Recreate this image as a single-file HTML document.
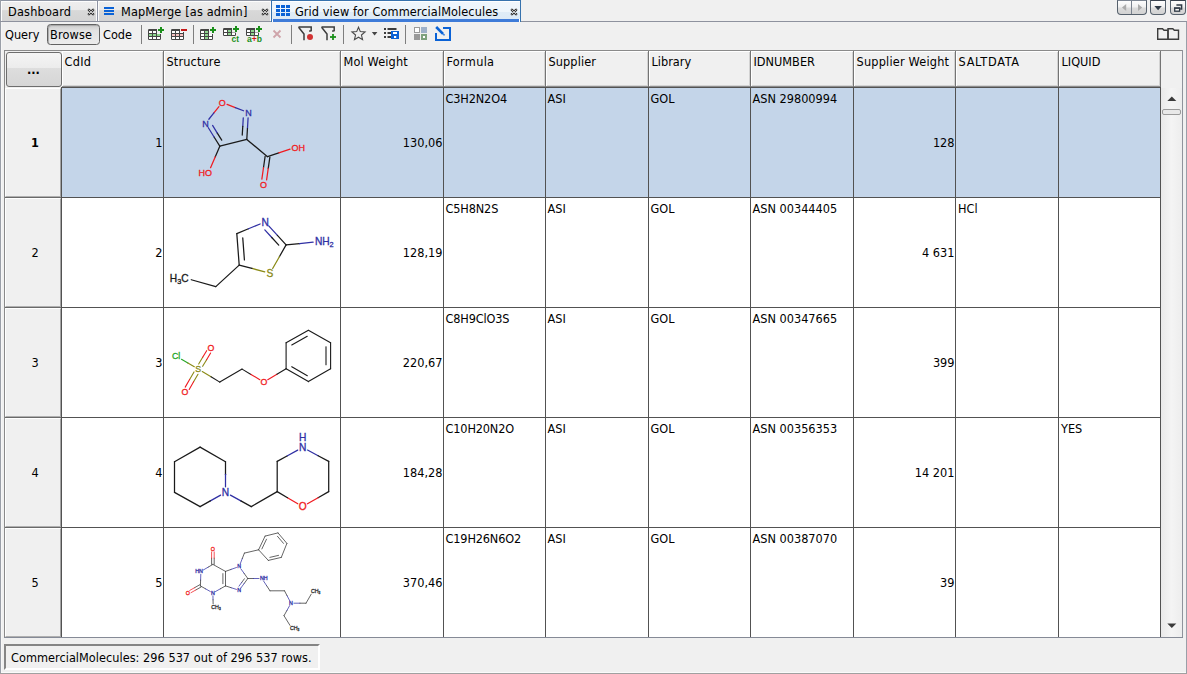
<!DOCTYPE html>
<html><head><meta charset="utf-8"><title>Grid view for CommercialMolecules</title>
<style>
html,body{margin:0;padding:0}
body{width:1187px;height:674px;overflow:hidden;background:#f0f0f0;position:relative;
 font-family:"DejaVu Sans Condensed","Liberation Sans",sans-serif;font-size:12.6px;color:#000;line-height:15px}
div,span{box-sizing:border-box}
.a{position:absolute}
.t{position:absolute;white-space:nowrap;height:15px;line-height:15px}
.r{text-align:right}
.mol text{font-family:"Liberation Sans","DejaVu Sans",sans-serif;stroke-width:0.3px;paint-order:stroke}
</style></head>
<body>
<div class="a" style="left:0px;top:0px;width:271px;height:1px;background:#8e95a3"></div>
<div class="a" style="left:0px;top:0px;width:1px;height:674px;background:#9a9fa8"></div>
<div class="a" style="left:1px;top:672px;width:1187px;height:1px;background:#fafafa"></div>
<div class="a" style="left:0px;top:673px;width:1187px;height:1px;background:#a0a0a0"></div>
<div class="a" style="left:1186px;top:21px;width:1px;height:652px;background:#9a9fa8"></div>
<div class="a" style="left:0px;top:21px;width:1187px;height:1px;background:#8e929e"></div>
<div class="a" style="left:1px;top:1px;width:270px;height:1px;background:#fdfdfd"></div>
<div class="a" style="left:2px;top:2px;width:94px;height:19px;background:linear-gradient(#eeeeee 0,#eaeaea 43%,#d8d8d8 45%,#d4d4d4 100%)"></div>
<div class="a" style="left:1px;top:1px;width:1px;height:20px;background:#fdfdfd"></div>
<div class="a" style="left:1px;top:22px;width:1px;height:650px;background:#f7f7f7"></div>
<div class="a" style="left:96px;top:1px;width:1px;height:20px;background:#fbfbfb"></div>
<div class="a" style="left:97px;top:1px;width:1px;height:20px;background:#8d92a2"></div>
<div class="a" style="left:98px;top:1px;width:1px;height:20px;background:#fbfbfb"></div>
<div class="a" style="left:99px;top:2px;width:171px;height:19px;background:linear-gradient(#eeeeee 0,#eaeaea 43%,#d8d8d8 45%,#d4d4d4 100%)"></div>
<div class="a" style="left:270px;top:1px;width:1px;height:20px;background:#fbfbfb"></div>
<div class="a" style="left:271px;top:0px;width:250px;height:22px;background:linear-gradient(#ffffff 0,#ffffff 5%,#eff6fc 6%,#edf5fb 50%,#dfecf7 51%,#dbe9f6 100%);border:1px solid #3672ad;border-bottom:none"></div>
<div class="a" style="left:273px;top:19px;width:246px;height:3px;background:#3e7bd8"></div>
<div class="a" style="left:272px;top:19px;width:1px;height:3px;background:#fff"></div>
<div class="a" style="left:519px;top:19px;width:1px;height:3px;background:#fff"></div>
<div class="t" style="left:8px;top:4px;letter-spacing:0.2px">Dashboard</div>
<svg class="a" style="left:86.5px;top:7.5px" width="8" height="8" viewBox="0 0 8 8"><path d="M1.9 1.9 L6.1 6.1 M6.1 1.9 L1.9 6.1" stroke="#333333" stroke-width="2.5" stroke-linecap="round"/><path d="M1.9 1.9 L6.1 6.1 M6.1 1.9 L1.9 6.1" stroke="#e8e8e8" stroke-width="0.8" stroke-linecap="round"/></svg>
<div class="a" style="left:104px;top:7px;width:10px;height:2px;background:#0a62d6"></div>
<div class="a" style="left:104px;top:10px;width:10px;height:2px;background:#0a62d6"></div>
<div class="a" style="left:104px;top:13px;width:10px;height:2px;background:#0a62d6"></div>
<div class="t" style="left:121px;top:4px;letter-spacing:0.15px">MapMerge [as admin]</div>
<svg class="a" style="left:260.5px;top:7.5px" width="8" height="8" viewBox="0 0 8 8"><path d="M1.9 1.9 L6.1 6.1 M6.1 1.9 L1.9 6.1" stroke="#333333" stroke-width="2.5" stroke-linecap="round"/><path d="M1.9 1.9 L6.1 6.1 M6.1 1.9 L1.9 6.1" stroke="#e8e8e8" stroke-width="0.8" stroke-linecap="round"/></svg>
<div class="a" style="left:276px;top:5px;width:4px;height:3px;background:#0a62d6"></div>
<div class="a" style="left:281px;top:5px;width:4px;height:3px;background:#0a62d6"></div>
<div class="a" style="left:286px;top:5px;width:4px;height:3px;background:#0a62d6"></div>
<div class="a" style="left:276px;top:9px;width:4px;height:3px;background:#0a62d6"></div>
<div class="a" style="left:281px;top:9px;width:4px;height:3px;background:#0a62d6"></div>
<div class="a" style="left:286px;top:9px;width:4px;height:3px;background:#0a62d6"></div>
<div class="a" style="left:276px;top:13px;width:4px;height:3px;background:#0a62d6"></div>
<div class="a" style="left:281px;top:13px;width:4px;height:3px;background:#0a62d6"></div>
<div class="a" style="left:286px;top:13px;width:4px;height:3px;background:#0a62d6"></div>
<div class="t" style="left:295px;top:4px;letter-spacing:0.09px">Grid view for CommercialMolecules</div>
<svg class="a" style="left:509.5px;top:7.5px" width="8" height="8" viewBox="0 0 8 8"><path d="M1.9 1.9 L6.1 6.1 M6.1 1.9 L1.9 6.1" stroke="#333333" stroke-width="2.5" stroke-linecap="round"/><path d="M1.9 1.9 L6.1 6.1 M6.1 1.9 L1.9 6.1" stroke="#e8e8e8" stroke-width="0.8" stroke-linecap="round"/></svg>
<div class="a" style="left:1117px;top:0px;width:30px;height:15px;background:linear-gradient(#fdfdfd 0,#f0f0f0 48%,#dcdcdc 52%,#d2d2d2 100%);border:1px solid #55606c;border-top:1px solid #7c8592;border-radius:0 0 4px 4px"></div>
<div class="a" style="left:1131px;top:1px;width:1px;height:13px;background:#7a828e"></div>
<div class="a" style="left:1150px;top:0px;width:16px;height:15px;background:linear-gradient(#fdfdfd 0,#f0f0f0 48%,#dcdcdc 52%,#d2d2d2 100%);border:1px solid #55606c;border-top:1px solid #7c8592;border-radius:0 0 4px 4px;border-top-color:#39424e"></div>
<div class="a" style="left:1170px;top:0px;width:16px;height:15px;background:linear-gradient(#fdfdfd 0,#f0f0f0 48%,#dcdcdc 52%,#d2d2d2 100%);border:1px solid #55606c;border-top:1px solid #7c8592;border-radius:0 0 4px 4px;border-top-color:#39424e"></div>
<svg class="a" style="left:1117px;top:0" width="70" height="15" viewBox="1117 0 70 15"><path d="M1126.2 4 L1126.2 11 L1122 7.5Z" fill="#ababab"/><path d="M1138 4 L1138 11 L1142.2 7.5Z" fill="#ababab"/><path d="M1154.4 6 L1161.8 6 L1158.1 10.2Z" fill="#2f3a46"/><path d="M1176.4 4.9 h5.2 v4.2 h-1.4" fill="none" stroke="#2f3a46" stroke-width="1.5"/><rect x="1174.7" y="8.1" width="4.9" height="3.1" fill="#f4f4f4" stroke="#2f3a46" stroke-width="1.3"/><rect x="1174" y="7.4" width="6.3" height="1.3" fill="#2f3a46"/></svg>
<div class="t" style="left:5px;top:27px;">Query</div>
<div class="a" style="left:47px;top:24px;width:53px;height:21px;border:1px solid #626262;border-radius:3.5px;background:linear-gradient(#cccccc 0,#e2e2e2 30%,#ececec 100%);box-shadow:inset 1px 1px 1px #a8a8a8"></div>
<div class="t" style="left:50px;top:27px;letter-spacing:0.15px">Browse</div>
<div class="t" style="left:103px;top:27px;">Code</div>
<div class="a" style="left:141px;top:25px;width:1px;height:19px;background:#7e7e7e"></div>
<div class="a" style="left:193px;top:25px;width:1px;height:19px;background:#7e7e7e"></div>
<div class="a" style="left:291px;top:25px;width:1px;height:19px;background:#7e7e7e"></div>
<div class="a" style="left:343px;top:25px;width:1px;height:19px;background:#7e7e7e"></div>
<div class="a" style="left:405px;top:25px;width:1px;height:19px;background:#7e7e7e"></div>
<svg class="a" style="left:140px;top:22px" width="320" height="26" viewBox="140 22 320 26"><rect x="148" y="29" width="13" height="11" rx="1.2" fill="#454545"/><rect x="149" y="31" width="3" height="2" fill="#ffffff"/><rect x="153" y="31" width="3" height="2" fill="#ffffff"/><rect x="157" y="31" width="3" height="2" fill="#ffffff"/><rect x="149" y="34" width="3" height="2" fill="#8fd68f"/><rect x="153" y="34" width="3" height="2" fill="#8fd68f"/><rect x="157" y="34" width="3" height="2" fill="#8fd68f"/><rect x="149" y="37" width="3" height="2" fill="#ffffff"/><rect x="153" y="37" width="3" height="2" fill="#ffffff"/><rect x="157" y="37" width="3" height="2" fill="#ffffff"/><rect x="157" y="26" width="8" height="8" fill="#f0f0f0"/><rect x="158" y="29.0" width="6" height="2" fill="#1a8f1a"/><rect x="160.0" y="27" width="2" height="6" fill="#1a8f1a"/><rect x="171" y="29" width="13" height="11" rx="1.2" fill="#454545"/><rect x="172" y="31" width="3" height="2" fill="#ffffff"/><rect x="176" y="31" width="3" height="2" fill="#ffffff"/><rect x="180" y="31" width="3" height="2" fill="#ffffff"/><rect x="172" y="34" width="3" height="2" fill="#f5c0c0"/><rect x="176" y="34" width="3" height="2" fill="#f5c0c0"/><rect x="180" y="34" width="3" height="2" fill="#f5c0c0"/><rect x="172" y="37" width="3" height="2" fill="#ffffff"/><rect x="176" y="37" width="3" height="2" fill="#ffffff"/><rect x="180" y="37" width="3" height="2" fill="#ffffff"/><rect x="180" y="27" width="8" height="5" fill="#f0f0f0"/><rect x="181" y="29" width="6" height="2" fill="#c41818"/><rect x="200" y="29" width="13" height="11" rx="1.2" fill="#454545"/><rect x="201" y="31" width="3" height="2" fill="#ffffff"/><rect x="205" y="31" width="3" height="2" fill="#8fd68f"/><rect x="209" y="31" width="3" height="2" fill="#ffffff"/><rect x="201" y="34" width="3" height="2" fill="#ffffff"/><rect x="205" y="34" width="3" height="2" fill="#8fd68f"/><rect x="209" y="34" width="3" height="2" fill="#ffffff"/><rect x="201" y="37" width="3" height="2" fill="#ffffff"/><rect x="205" y="37" width="3" height="2" fill="#8fd68f"/><rect x="209" y="37" width="3" height="2" fill="#ffffff"/><rect x="209" y="26" width="8" height="8" fill="#f0f0f0"/><rect x="210" y="29.0" width="6" height="2" fill="#1a8f1a"/><rect x="212.0" y="27" width="2" height="6" fill="#1a8f1a"/><rect x="223" y="28" width="13" height="8" rx="1.2" fill="#454545"/><rect x="224" y="30" width="3" height="2" fill="#ffffff"/><rect x="228" y="30" width="3" height="2" fill="#8fd68f"/><rect x="232" y="30" width="3" height="2" fill="#ffffff"/><rect x="224" y="33" width="3" height="2" fill="#ffffff"/><rect x="228" y="33" width="3" height="2" fill="#8fd68f"/><rect x="232" y="33" width="3" height="2" fill="#ffffff"/><rect x="232" y="25" width="8" height="7.6" fill="#f0f0f0"/><rect x="233" y="28.0" width="6" height="2" fill="#1a8f1a"/><rect x="235.0" y="26" width="2" height="6" fill="#1a8f1a"/><text x="231.5" y="42" font-size="8.5" font-weight="bold" fill="#1a8f1a" font-family='"Liberation Sans",sans-serif' textLength="7.5" lengthAdjust="spacingAndGlyphs">ct</text><rect x="246" y="28" width="13" height="8" rx="1.2" fill="#454545"/><rect x="247" y="30" width="3" height="2" fill="#ffffff"/><rect x="251" y="30" width="3" height="2" fill="#8fd68f"/><rect x="255" y="30" width="3" height="2" fill="#ffffff"/><rect x="247" y="33" width="3" height="2" fill="#ffffff"/><rect x="251" y="33" width="3" height="2" fill="#8fd68f"/><rect x="255" y="33" width="3" height="2" fill="#ffffff"/><rect x="255" y="25" width="8" height="7.6" fill="#f0f0f0"/><rect x="256" y="28.0" width="6" height="2" fill="#1a8f1a"/><rect x="258.0" y="26" width="2" height="6" fill="#1a8f1a"/><text x="247" y="42" font-size="8.5" font-weight="bold" fill="#1a8f1a" font-family='"Liberation Sans",sans-serif' textLength="15" lengthAdjust="spacingAndGlyphs">a<tspan fill="#d01818">+</tspan>b</text><path d="M273.5 30.5 L280.5 37.5 M280.5 30.5 L273.5 37.5" stroke="#cfa4aa" stroke-width="1.8" fill="none"/><path d="M298.5 27 H311.2 V30.6 L309.2 31.2" fill="none" stroke="#3c3c3c" stroke-width="1.5" stroke-linejoin="miter"/><path d="M298.6 27.2 L304 34 V40.3" fill="none" stroke="#3c3c3c" stroke-width="1.5"/><circle cx="310" cy="37" r="3" fill="#d23232"/><path d="M321.5 27 H334.2 V30.6 L332.2 31.2" fill="none" stroke="#3c3c3c" stroke-width="1.5" stroke-linejoin="miter"/><path d="M321.6 27.2 L327 34 V40.3" fill="none" stroke="#3c3c3c" stroke-width="1.5"/><rect x="330" y="36.1" width="6" height="1.8" fill="#1a8f1a"/><rect x="332.1" y="34" width="1.8" height="6" fill="#1a8f1a"/><polygon points="358.50,27.20 360.32,31.59 365.06,31.97 361.45,35.06 362.56,39.68 358.50,37.20 354.44,39.68 355.55,35.06 351.94,31.97 356.68,31.59" fill="none" stroke="#4a4a4a" stroke-width="1.1" stroke-linejoin="miter"/><path d="M371.8 32 h5.6 l-2.8 3.4z" fill="#454545"/><rect x="384" y="28" width="2" height="2" fill="#3c3c3c"/><rect x="387.5" y="28" width="9" height="2" fill="#3c3c3c"/><rect x="384" y="32" width="2" height="2" fill="#3c3c3c"/><rect x="387.5" y="32" width="3.5" height="2" fill="#3c3c3c"/><rect x="384" y="36" width="2" height="2" fill="#3c3c3c"/><rect x="387.5" y="36" width="3.5" height="2" fill="#3c3c3c"/><rect x="391" y="31" width="8" height="8" fill="#0a62d6"/><rect x="393" y="32" width="4" height="2" fill="#fff"/><rect x="394" y="36" width="2.2" height="2" fill="#fff"/><rect x="414.5" y="27.5" width="5" height="5" fill="#fff" stroke="#9a9a9a" stroke-width="1"/><rect x="421" y="27" width="6" height="6" fill="#9fb1c9"/><rect x="414" y="34" width="6" height="6" fill="#999999"/><rect x="421" y="34" width="6" height="6" fill="#7ea27e"/><rect x="423" y="36" width="2" height="2" fill="#fff"/><path d="M443 28 H450 V40 H436 V33" fill="none" stroke="#0a62d6" stroke-width="2"/><path d="M436.2 27 L443 33.8" stroke="#0a62d6" stroke-width="2.6"/><path d="M443 33.8 l1.6 1.6" stroke="#3f86e0" stroke-width="1.6"/></svg>
<svg class="a" style="left:1155px;top:26px" width="26" height="16" viewBox="1155 26 26 16"><path d="M1157.7 39.3 V28.8 H1162.5 L1164 30.3 H1168 V39.3 Z" fill="none" stroke="#3c3c3c" stroke-width="1.4"/><path d="M1168 39.3 V28.8 H1172.8 L1174.3 30.3 H1178.5 V39.3 Z" fill="none" stroke="#3c3c3c" stroke-width="1.4"/></svg>
<div class="a" style="left:4px;top:50px;width:1179px;height:1px;background:#8a8a8a"></div>
<div class="a" style="left:4px;top:50px;width:1px;height:588px;background:#8a8a8a"></div>
<div class="a" style="left:1182px;top:50px;width:1px;height:588px;background:#8f939b"></div>
<div class="a" style="left:62px;top:88px;width:1099px;height:549px;background:#fff"></div>
<div class="a" style="left:62px;top:88px;width:1099px;height:109px;background:#c4d5e9"></div>
<div class="a" style="left:62px;top:85px;width:1099px;height:1px;background:#d4d4d4"></div>
<div class="a" style="left:62px;top:86px;width:1099px;height:1px;background:#8c8c8c"></div>
<div class="a" style="left:62px;top:51px;width:101px;height:1px;background:#fff"></div>
<div class="a" style="left:62px;top:51px;width:1px;height:35px;background:#fff"></div>
<div class="a" style="left:162px;top:52px;width:1px;height:33px;background:#d2d2d2"></div>
<div class="a" style="left:163px;top:51px;width:1px;height:36px;background:#747474"></div>
<div class="t" style="left:64.5px;top:54px;letter-spacing:0.3px">CdId</div>
<div class="a" style="left:164px;top:51px;width:176px;height:1px;background:#fff"></div>
<div class="a" style="left:164px;top:51px;width:1px;height:35px;background:#fff"></div>
<div class="a" style="left:339px;top:52px;width:1px;height:33px;background:#d2d2d2"></div>
<div class="a" style="left:340px;top:51px;width:1px;height:36px;background:#747474"></div>
<div class="t" style="left:166.5px;top:54px;letter-spacing:0.15px">Structure</div>
<div class="a" style="left:341px;top:51px;width:102px;height:1px;background:#fff"></div>
<div class="a" style="left:341px;top:51px;width:1px;height:35px;background:#fff"></div>
<div class="a" style="left:442px;top:52px;width:1px;height:33px;background:#d2d2d2"></div>
<div class="a" style="left:443px;top:51px;width:1px;height:36px;background:#747474"></div>
<div class="t" style="left:343.5px;top:54px;letter-spacing:0.15px">Mol Weight</div>
<div class="a" style="left:444px;top:51px;width:101px;height:1px;background:#fff"></div>
<div class="a" style="left:444px;top:51px;width:1px;height:35px;background:#fff"></div>
<div class="a" style="left:544px;top:52px;width:1px;height:33px;background:#d2d2d2"></div>
<div class="a" style="left:545px;top:51px;width:1px;height:36px;background:#747474"></div>
<div class="t" style="left:446.5px;top:54px;letter-spacing:0.3px">Formula</div>
<div class="a" style="left:546px;top:51px;width:102px;height:1px;background:#fff"></div>
<div class="a" style="left:546px;top:51px;width:1px;height:35px;background:#fff"></div>
<div class="a" style="left:647px;top:52px;width:1px;height:33px;background:#d2d2d2"></div>
<div class="a" style="left:648px;top:51px;width:1px;height:36px;background:#747474"></div>
<div class="t" style="left:548.5px;top:54px;letter-spacing:0.1px">Supplier</div>
<div class="a" style="left:649px;top:51px;width:101px;height:1px;background:#fff"></div>
<div class="a" style="left:649px;top:51px;width:1px;height:35px;background:#fff"></div>
<div class="a" style="left:749px;top:52px;width:1px;height:33px;background:#d2d2d2"></div>
<div class="a" style="left:750px;top:51px;width:1px;height:36px;background:#747474"></div>
<div class="t" style="left:651.5px;top:54px;letter-spacing:0px">Library</div>
<div class="a" style="left:751px;top:51px;width:102px;height:1px;background:#fff"></div>
<div class="a" style="left:751px;top:51px;width:1px;height:35px;background:#fff"></div>
<div class="a" style="left:852px;top:52px;width:1px;height:33px;background:#d2d2d2"></div>
<div class="a" style="left:853px;top:51px;width:1px;height:36px;background:#747474"></div>
<div class="t" style="left:753.5px;top:54px;letter-spacing:0px">IDNUMBER</div>
<div class="a" style="left:854px;top:51px;width:101px;height:1px;background:#fff"></div>
<div class="a" style="left:854px;top:51px;width:1px;height:35px;background:#fff"></div>
<div class="a" style="left:954px;top:52px;width:1px;height:33px;background:#d2d2d2"></div>
<div class="a" style="left:955px;top:51px;width:1px;height:36px;background:#747474"></div>
<div class="t" style="left:856.5px;top:54px;letter-spacing:0.2px">Supplier Weight</div>
<div class="a" style="left:956px;top:51px;width:102px;height:1px;background:#fff"></div>
<div class="a" style="left:956px;top:51px;width:1px;height:35px;background:#fff"></div>
<div class="a" style="left:1057px;top:52px;width:1px;height:33px;background:#d2d2d2"></div>
<div class="a" style="left:1058px;top:51px;width:1px;height:36px;background:#747474"></div>
<div class="t" style="left:958.5px;top:54px;letter-spacing:0.7px">SALTDATA</div>
<div class="a" style="left:1059px;top:51px;width:101px;height:1px;background:#fff"></div>
<div class="a" style="left:1059px;top:51px;width:1px;height:35px;background:#fff"></div>
<div class="a" style="left:1159px;top:52px;width:1px;height:33px;background:#d2d2d2"></div>
<div class="a" style="left:1160px;top:51px;width:1px;height:36px;background:#747474"></div>
<div class="t" style="left:1061.5px;top:54px;letter-spacing:0px">LIQUID</div>
<div class="a" style="left:6px;top:52px;width:56px;height:35px;border:1px solid #6e6e6e;border-radius:3px;background:linear-gradient(#f4f4f4 0,#ececec 46%,#dddddd 47%,#d6d6d6 100%)"></div>
<div class="t" style="left:27px;top:62px;font-weight:bold">...</div>
<div class="a" style="left:5px;top:88px;width:56px;height:109px;background:#f0f0f0;border-top:1px solid #fff;border-left:1px solid #fff;border-right:1px solid #a4a4a4;border-bottom:1px solid #b0b0b0"></div>
<div class="a" style="left:5px;top:197px;width:57px;height:1px;background:#6a6a6a"></div>
<div class="t" style="left:7px;width:56px;text-align:center;top:135px;font-weight:bold;">1</div>
<div class="a" style="left:5px;top:198px;width:56px;height:109px;background:#f0f0f0;border-top:1px solid #fff;border-left:1px solid #fff;border-right:1px solid #a4a4a4;border-bottom:1px solid #b0b0b0"></div>
<div class="a" style="left:5px;top:307px;width:57px;height:1px;background:#6a6a6a"></div>
<div class="t" style="left:7px;width:56px;text-align:center;top:245px;">2</div>
<div class="a" style="left:5px;top:308px;width:56px;height:109px;background:#f0f0f0;border-top:1px solid #fff;border-left:1px solid #fff;border-right:1px solid #a4a4a4;border-bottom:1px solid #b0b0b0"></div>
<div class="a" style="left:5px;top:417px;width:57px;height:1px;background:#6a6a6a"></div>
<div class="t" style="left:7px;width:56px;text-align:center;top:355px;">3</div>
<div class="a" style="left:5px;top:418px;width:56px;height:109px;background:#f0f0f0;border-top:1px solid #fff;border-left:1px solid #fff;border-right:1px solid #a4a4a4;border-bottom:1px solid #b0b0b0"></div>
<div class="a" style="left:5px;top:527px;width:57px;height:1px;background:#6a6a6a"></div>
<div class="t" style="left:7px;width:56px;text-align:center;top:465px;">4</div>
<div class="a" style="left:5px;top:528px;width:56px;height:109px;background:#f0f0f0;border-top:1px solid #fff;border-left:1px solid #fff;border-right:1px solid #a4a4a4;border-bottom:1px solid #b0b0b0"></div>
<div class="a" style="left:5px;top:637px;width:57px;height:1px;background:#6a6a6a"></div>
<div class="t" style="left:7px;width:56px;text-align:center;top:575px;">5</div>
<div class="a" style="left:61px;top:87px;width:1px;height:550px;background:#525252"></div>
<div class="a" style="left:163px;top:87px;width:1px;height:550px;background:#525252"></div>
<div class="a" style="left:340px;top:87px;width:1px;height:550px;background:#525252"></div>
<div class="a" style="left:443px;top:87px;width:1px;height:550px;background:#525252"></div>
<div class="a" style="left:545px;top:87px;width:1px;height:550px;background:#525252"></div>
<div class="a" style="left:648px;top:87px;width:1px;height:550px;background:#525252"></div>
<div class="a" style="left:750px;top:87px;width:1px;height:550px;background:#525252"></div>
<div class="a" style="left:853px;top:87px;width:1px;height:550px;background:#525252"></div>
<div class="a" style="left:955px;top:87px;width:1px;height:550px;background:#525252"></div>
<div class="a" style="left:1058px;top:87px;width:1px;height:550px;background:#525252"></div>
<div class="a" style="left:1160px;top:87px;width:1px;height:550px;background:#525252"></div>
<div class="a" style="left:61px;top:87px;width:1100px;height:1px;background:#525252"></div>
<div class="a" style="left:61px;top:197px;width:1100px;height:1px;background:#525252"></div>
<div class="a" style="left:61px;top:307px;width:1100px;height:1px;background:#525252"></div>
<div class="a" style="left:61px;top:417px;width:1100px;height:1px;background:#525252"></div>
<div class="a" style="left:61px;top:527px;width:1100px;height:1px;background:#525252"></div>
<div class="a" style="left:4px;top:637px;width:1179px;height:1px;background:#858a96"></div>
<div class="t r" style="right:1024.5px;top:135px;">1</div>
<div class="t r" style="right:744.5px;top:135px;">130,06</div>
<div class="t" style="left:445.5px;top:91px;letter-spacing:-0.15px">C3H2N2O4</div>
<div class="t" style="left:547.5px;top:91px;">ASI</div>
<div class="t" style="left:650.5px;top:91px;">GOL</div>
<div class="t" style="left:752.5px;top:91px;">ASN 29800994</div>
<div class="t r" style="right:232.5px;top:135px;">128</div>
<div class="t r" style="right:1024.5px;top:245px;">2</div>
<div class="t r" style="right:744.5px;top:245px;">128,19</div>
<div class="t" style="left:445.5px;top:201px;letter-spacing:-0.15px">C5H8N2S</div>
<div class="t" style="left:547.5px;top:201px;">ASI</div>
<div class="t" style="left:650.5px;top:201px;">GOL</div>
<div class="t" style="left:752.5px;top:201px;">ASN 00344405</div>
<div class="t r" style="right:232.5px;top:245px;">4 631</div>
<div class="t" style="left:958px;top:201px;">HCl</div>
<div class="t r" style="right:1024.5px;top:355px;">3</div>
<div class="t r" style="right:744.5px;top:355px;">220,67</div>
<div class="t" style="left:445.5px;top:311px;letter-spacing:-0.15px">C8H9ClO3S</div>
<div class="t" style="left:547.5px;top:311px;">ASI</div>
<div class="t" style="left:650.5px;top:311px;">GOL</div>
<div class="t" style="left:752.5px;top:311px;">ASN 00347665</div>
<div class="t r" style="right:232.5px;top:355px;">399</div>
<div class="t r" style="right:1024.5px;top:465px;">4</div>
<div class="t r" style="right:744.5px;top:465px;">184,28</div>
<div class="t" style="left:445.5px;top:421px;letter-spacing:-0.15px">C10H20N2O</div>
<div class="t" style="left:547.5px;top:421px;">ASI</div>
<div class="t" style="left:650.5px;top:421px;">GOL</div>
<div class="t" style="left:752.5px;top:421px;">ASN 00356353</div>
<div class="t r" style="right:232.5px;top:465px;">14 201</div>
<div class="t" style="left:1061px;top:421px;">YES</div>
<div class="t r" style="right:1024.5px;top:575px;">5</div>
<div class="t r" style="right:744.5px;top:575px;">370,46</div>
<div class="t" style="left:445.5px;top:531px;letter-spacing:-0.15px">C19H26N6O2</div>
<div class="t" style="left:547.5px;top:531px;">ASI</div>
<div class="t" style="left:650.5px;top:531px;">GOL</div>
<div class="t" style="left:752.5px;top:531px;">ASN 00387070</div>
<div class="t r" style="right:232.5px;top:575px;">39</div>
<div class="a" style="left:1161px;top:88px;width:21px;height:549px;background:linear-gradient(90deg,#e9e9e9,#f4f4f4 50%,#ededed)"></div>
<svg class="a" style="left:1161px;top:88px" width="21" height="549" viewBox="1161 88 21 549"><path d="M1167.3 101 L1176.3 101 L1171.8 96.6Z" fill="#3a3a3a"/><rect x="1162.5" y="109.5" width="18" height="5" rx="1.5" fill="#e8e8e8" stroke="#9a9a9a" stroke-width="1"/><path d="M1167.3 623.5 L1176.3 623.5 L1171.8 628Z" fill="#3a3a3a"/></svg>
<div class="a" style="left:4px;top:644px;width:316px;height:26px;background:#f0f0f0;border-top:2px solid #858585;border-left:2px solid #858585;border-right:2px solid #fff;border-bottom:2px solid #fff"></div>
<div class="t" style="left:11px;top:649.5px;letter-spacing:0.03px">CommercialMolecules: 296 537 out of 296 537 rows.</div>
<svg class="a mol" style="left:164px;top:88px" width="176" height="109" viewBox="164 88 176 109"><g stroke-width="1.25" stroke-linecap="round" fill="none"><line x1="227.06" y1="104.45" x2="235.3" y2="107.6" stroke="#f01a20"/><line x1="235.3" y1="107.6" x2="243.54" y2="110.75" stroke="#3030a4"/><line x1="218.95" y1="106.66" x2="213.9" y2="112.95" stroke="#f01a20"/><line x1="213.9" y1="112.95" x2="208.85" y2="119.24" stroke="#3030a4"/><line x1="248.09" y1="117.79" x2="247.45" y2="128.6" stroke="#3030a4"/><line x1="247.45" y1="128.6" x2="246.8" y2="139.4" stroke="#1a1a1a"/><line x1="243.28" y1="117.8" x2="242.77" y2="126.42" stroke="#3030a4"/><line x1="242.77" y1="126.42" x2="242.25" y2="135.04" stroke="#1a1a1a"/><line x1="246.8" y1="139.4" x2="219.8" y2="146.2" stroke="#1a1a1a"/><line x1="219.8" y1="146.2" x2="214.07" y2="136.96" stroke="#1a1a1a"/><line x1="214.07" y1="136.96" x2="208.34" y2="127.72" stroke="#3030a4"/><line x1="221.73" y1="140.2" x2="217.15" y2="132.82" stroke="#1a1a1a"/><line x1="217.15" y1="132.82" x2="212.58" y2="125.44" stroke="#3030a4"/><line x1="246.8" y1="139.4" x2="267.5" y2="156.7" stroke="#1a1a1a"/><line x1="267.5" y1="156.7" x2="278.78" y2="152.92" stroke="#1a1a1a"/><line x1="278.78" y1="152.92" x2="290.07" y2="149.15" stroke="#f01a20"/><line x1="265.12" y1="156.36" x2="263.49" y2="167.74" stroke="#1a1a1a"/><line x1="263.49" y1="167.74" x2="261.86" y2="179.11" stroke="#f01a20"/><line x1="269.88" y1="157.04" x2="268.24" y2="168.42" stroke="#1a1a1a"/><line x1="268.24" y1="168.42" x2="266.61" y2="179.79" stroke="#f01a20"/><line x1="219.8" y1="146.2" x2="215.18" y2="156.91" stroke="#1a1a1a"/><line x1="215.18" y1="156.91" x2="210.56" y2="167.63" stroke="#f01a20"/></g><text x="222.2" y="105.84" font-size="9.0" text-anchor="middle" fill="#f01a20" stroke="#f01a20">O</text><text x="248.4" y="115.84" font-size="9.0" text-anchor="middle" fill="#3030a4" stroke="#3030a4">N</text><text x="205.6" y="126.54" font-size="9.0" text-anchor="middle" fill="#3030a4" stroke="#3030a4">N</text><text x="295" y="150.74" font-size="9.0" fill="#f01a20" stroke="#f01a20" dx="-3.6">OH</text><text x="263.5" y="187.84" font-size="9.0" text-anchor="middle" fill="#f01a20" stroke="#f01a20">O</text><text x="208.5" y="175.64" font-size="9.0" fill="#f01a20" stroke="#f01a20" text-anchor="end" dx="3.6">HO</text></svg>
<svg class="a mol" style="left:164px;top:198px" width="176" height="109" viewBox="164 198 176 109"><g stroke-width="1.25" stroke-linecap="round" fill="none"><line x1="236.8" y1="233.6" x2="248.45" y2="228.78" stroke="#1a1a1a"/><line x1="248.45" y1="228.78" x2="260.11" y2="223.96" stroke="#3030a4"/><line x1="268.74" y1="225.89" x2="277.42" y2="235.39" stroke="#3030a4"/><line x1="277.42" y1="235.39" x2="286.1" y2="244.9" stroke="#1a1a1a"/><line x1="264.81" y1="229.89" x2="271.78" y2="237.52" stroke="#3030a4"/><line x1="271.78" y1="237.52" x2="278.75" y2="245.16" stroke="#1a1a1a"/><line x1="286.1" y1="244.9" x2="279.39" y2="256.7" stroke="#1a1a1a"/><line x1="279.39" y1="256.7" x2="272.67" y2="268.51" stroke="#8a8a16"/><line x1="264.78" y1="271.83" x2="251.99" y2="268.46" stroke="#8a8a16"/><line x1="251.99" y1="268.46" x2="239.2" y2="265.1" stroke="#1a1a1a"/><line x1="239.2" y1="265.1" x2="236.8" y2="233.6" stroke="#1a1a1a"/><line x1="244.42" y1="259.93" x2="242.75" y2="237.92" stroke="#1a1a1a"/><line x1="286.1" y1="244.9" x2="299.61" y2="243.57" stroke="#1a1a1a"/><line x1="299.61" y1="243.57" x2="313.13" y2="242.23" stroke="#3030a4"/><line x1="239.2" y1="265.1" x2="215.8" y2="286.6" stroke="#1a1a1a"/><line x1="215.8" y1="286.6" x2="191.26" y2="279.75" stroke="#1a1a1a"/></g><text x="265.1" y="225.57" font-size="10.2" text-anchor="middle" fill="#3030a4" stroke="#3030a4">N</text><text x="270" y="276.87" font-size="10.2" text-anchor="middle" fill="#8a8a16" stroke="#8a8a16">S</text><text x="318.5" y="245.37" font-size="10.2" fill="#3030a4" stroke="#3030a4" dx="-3.6">NH<tspan font-size="7.34" dy="2">2</tspan></text><text x="185" y="281.67" font-size="10.2" fill="#1a1a1a" stroke="#1a1a1a" text-anchor="end" dx="3.6">H<tspan font-size="7.34" dy="2">3</tspan><tspan dy="-2">C</tspan></text></svg>
<svg class="a mol" style="left:164px;top:308px" width="176" height="109" viewBox="164 308 176 109"><g stroke-width="1.1" stroke-linecap="round" fill="none"><line x1="181.46" y1="359.31" x2="187.89" y2="363.05" stroke="#26a626"/><line x1="187.89" y1="363.05" x2="194.32" y2="366.79" stroke="#8a8a16"/><line x1="202.64" y1="366.34" x2="206.62" y2="359.7" stroke="#8a8a16"/><line x1="206.62" y1="359.7" x2="210.61" y2="353.06" stroke="#f01a20"/><line x1="198.69" y1="363.97" x2="202.68" y2="357.33" stroke="#8a8a16"/><line x1="202.68" y1="357.33" x2="206.66" y2="350.69" stroke="#f01a20"/><line x1="194.01" y1="371.93" x2="189.61" y2="379.54" stroke="#8a8a16"/><line x1="189.61" y1="379.54" x2="185.21" y2="387.14" stroke="#f01a20"/><line x1="197.99" y1="374.23" x2="193.59" y2="381.84" stroke="#8a8a16"/><line x1="193.59" y1="381.84" x2="189.19" y2="389.44" stroke="#f01a20"/><line x1="202.24" y1="371.48" x2="211.02" y2="376.79" stroke="#8a8a16"/><line x1="211.02" y1="376.79" x2="219.8" y2="382.1" stroke="#1a1a1a"/><line x1="219.8" y1="382.1" x2="242.1" y2="369.1" stroke="#1a1a1a"/><line x1="242.1" y1="369.1" x2="250.98" y2="374.42" stroke="#1a1a1a"/><line x1="250.98" y1="374.42" x2="259.85" y2="379.74" stroke="#f01a20"/><line x1="267.74" y1="379.73" x2="276.92" y2="374.22" stroke="#f01a20"/><line x1="276.92" y1="374.22" x2="286.1" y2="368.7" stroke="#1a1a1a"/><line x1="286.1" y1="368.7" x2="286.1" y2="342.8" stroke="#1a1a1a"/><line x1="286.1" y1="342.8" x2="308.4" y2="330.3" stroke="#1a1a1a"/><line x1="291.76" y1="344.9" x2="307.24" y2="336.22" stroke="#1a1a1a"/><line x1="308.4" y1="330.3" x2="330.6" y2="342.8" stroke="#1a1a1a"/><line x1="330.6" y1="342.8" x2="330.6" y2="368.7" stroke="#1a1a1a"/><line x1="326" y1="346.71" x2="326" y2="364.79" stroke="#1a1a1a"/><line x1="330.6" y1="368.7" x2="308.4" y2="381.6" stroke="#1a1a1a"/><line x1="308.4" y1="381.6" x2="286.1" y2="368.7" stroke="#1a1a1a"/><line x1="307.32" y1="375.66" x2="291.79" y2="366.68" stroke="#1a1a1a"/></g><text x="176.1" y="359.37" font-size="8.8" text-anchor="middle" fill="#26a626" stroke="#26a626">Cl</text><text x="198.3" y="372.27" font-size="8.8" text-anchor="middle" fill="#8a8a16" stroke="#8a8a16">S</text><text x="210.9" y="351.27" font-size="8.8" text-anchor="middle" fill="#f01a20" stroke="#f01a20">O</text><text x="185" y="395.27" font-size="8.8" text-anchor="middle" fill="#f01a20" stroke="#f01a20">O</text><text x="263.8" y="385.27" font-size="8.8" text-anchor="middle" fill="#f01a20" stroke="#f01a20">O</text></svg>
<svg class="a mol" style="left:164px;top:418px" width="176" height="109" viewBox="164 418 176 109"><g stroke-width="1.25" stroke-linecap="round" fill="none"><line x1="200.1" y1="447.1" x2="225.5" y2="461.7" stroke="#1a1a1a"/><line x1="225.5" y1="461.7" x2="225.5" y2="474.25" stroke="#1a1a1a"/><line x1="225.5" y1="474.25" x2="225.5" y2="486.8" stroke="#3030a4"/><line x1="220.61" y1="495.13" x2="210.36" y2="500.87" stroke="#3030a4"/><line x1="210.36" y1="500.87" x2="200.1" y2="506.6" stroke="#1a1a1a"/><line x1="200.1" y1="506.6" x2="174.5" y2="492.4" stroke="#1a1a1a"/><line x1="174.5" y1="492.4" x2="174.5" y2="461.7" stroke="#1a1a1a"/><line x1="174.5" y1="461.7" x2="200.1" y2="447.1" stroke="#1a1a1a"/><line x1="230.41" y1="495.1" x2="240.85" y2="500.85" stroke="#3030a4"/><line x1="240.85" y1="500.85" x2="251.3" y2="506.6" stroke="#1a1a1a"/><line x1="251.3" y1="506.6" x2="277.2" y2="491.6" stroke="#1a1a1a"/><line x1="277.2" y1="491.6" x2="277.2" y2="461.4" stroke="#1a1a1a"/><line x1="277.2" y1="461.4" x2="287.45" y2="455.75" stroke="#1a1a1a"/><line x1="287.45" y1="455.75" x2="297.7" y2="450.1" stroke="#3030a4"/><line x1="307.53" y1="450.05" x2="318.12" y2="455.72" stroke="#3030a4"/><line x1="318.12" y1="455.72" x2="328.7" y2="461.4" stroke="#1a1a1a"/><line x1="328.7" y1="461.4" x2="328.7" y2="491.6" stroke="#1a1a1a"/><line x1="328.7" y1="491.6" x2="318.08" y2="497.7" stroke="#1a1a1a"/><line x1="318.08" y1="497.7" x2="307.46" y2="503.81" stroke="#f01a20"/><line x1="297.78" y1="503.75" x2="287.49" y2="497.68" stroke="#f01a20"/><line x1="287.49" y1="497.68" x2="277.2" y2="491.6" stroke="#1a1a1a"/></g><text x="225.5" y="496.07" font-size="10.2" text-anchor="middle" fill="#3030a4" stroke="#3030a4">N</text><text x="302.6" y="451.07" font-size="10.2" text-anchor="middle" fill="#3030a4" stroke="#3030a4">N</text><text x="302.6" y="451.07" dy="-10" font-size="10.2" text-anchor="middle" fill="#3030a4" stroke="#3030a4">H</text><text x="302.6" y="510.27" font-size="10.2" text-anchor="middle" fill="#f01a20" stroke="#f01a20">O</text></svg>
<svg class="a mol" style="left:164px;top:528px" width="176" height="109" viewBox="164 528 176 109"><g stroke-width="0.75" stroke-linecap="round" fill="none"><line x1="214.2" y1="564.4" x2="214.2" y2="558.15" stroke="#333333"/><line x1="214.2" y1="558.15" x2="214.2" y2="551.9" stroke="#f01a20"/><line x1="211.6" y1="564.4" x2="211.6" y2="558.15" stroke="#333333"/><line x1="211.6" y1="558.15" x2="211.6" y2="551.9" stroke="#f01a20"/><line x1="212.9" y1="564.4" x2="208.15" y2="567.17" stroke="#333333"/><line x1="208.15" y1="567.17" x2="203.4" y2="569.94" stroke="#3030a4"/><line x1="200.8" y1="574.3" x2="200.6" y2="580.1" stroke="#3030a4"/><line x1="200.6" y1="580.1" x2="200.4" y2="585.9" stroke="#333333"/><line x1="199.76" y1="584.77" x2="194.73" y2="587.61" stroke="#333333"/><line x1="194.73" y1="587.61" x2="189.69" y2="590.44" stroke="#f01a20"/><line x1="201.04" y1="587.03" x2="196" y2="589.87" stroke="#333333"/><line x1="196" y1="589.87" x2="190.96" y2="592.71" stroke="#f01a20"/><line x1="200.4" y1="585.9" x2="205.39" y2="588.73" stroke="#333333"/><line x1="205.39" y1="588.73" x2="210.38" y2="591.57" stroke="#3030a4"/><line x1="215.43" y1="591.58" x2="220.46" y2="588.74" stroke="#3030a4"/><line x1="220.46" y1="588.74" x2="225.5" y2="585.9" stroke="#333333"/><line x1="225.5" y1="585.9" x2="225.5" y2="571.4" stroke="#333333"/><line x1="222.9" y1="583.69" x2="222.9" y2="573.61" stroke="#333333"/><line x1="225.5" y1="571.4" x2="212.9" y2="564.4" stroke="#333333"/><line x1="225.5" y1="571.4" x2="230.98" y2="569.44" stroke="#333333"/><line x1="230.98" y1="569.44" x2="236.47" y2="567.48" stroke="#3030a4"/><line x1="240.89" y1="568.86" x2="244.34" y2="573.68" stroke="#3030a4"/><line x1="244.34" y1="573.68" x2="247.8" y2="578.5" stroke="#333333"/><line x1="247.8" y1="578.5" x2="244.35" y2="583.23" stroke="#333333"/><line x1="244.35" y1="583.23" x2="240.91" y2="587.96" stroke="#3030a4"/><line x1="244.4" y1="578.75" x2="241.69" y2="582.47" stroke="#333333"/><line x1="241.69" y1="582.47" x2="238.98" y2="586.18" stroke="#3030a4"/><line x1="236.44" y1="589.41" x2="230.97" y2="587.66" stroke="#3030a4"/><line x1="230.97" y1="587.66" x2="225.5" y2="585.9" stroke="#333333"/><line x1="212.96" y1="595.9" x2="213.04" y2="599.8" stroke="#3030a4"/><line x1="213.04" y1="599.8" x2="213.12" y2="603.7" stroke="#333333"/><line x1="247.8" y1="578.5" x2="253.4" y2="578.5" stroke="#333333"/><line x1="253.4" y1="578.5" x2="259" y2="578.5" stroke="#3030a4"/><line x1="263.49" y1="580.92" x2="266.75" y2="585.86" stroke="#3030a4"/><line x1="266.75" y1="585.86" x2="270" y2="590.8" stroke="#333333"/><line x1="270" y1="590.8" x2="284.5" y2="590.8" stroke="#333333"/><line x1="284.5" y1="590.8" x2="287.08" y2="595.72" stroke="#333333"/><line x1="287.08" y1="595.72" x2="289.65" y2="600.63" stroke="#3030a4"/><line x1="293.9" y1="603.2" x2="299.95" y2="603.2" stroke="#3030a4"/><line x1="299.95" y1="603.2" x2="306" y2="603.2" stroke="#333333"/><line x1="306" y1="603.2" x2="311.2" y2="594.17" stroke="#333333"/><line x1="289.58" y1="605.73" x2="286.79" y2="610.72" stroke="#3030a4"/><line x1="286.79" y1="610.72" x2="284" y2="615.7" stroke="#333333"/><line x1="284" y1="615.7" x2="290.01" y2="625.41" stroke="#333333"/><line x1="240.25" y1="563.8" x2="242.32" y2="558.45" stroke="#3030a4"/><line x1="242.32" y1="558.45" x2="244.4" y2="553.1" stroke="#333333"/><line x1="244.4" y1="553.1" x2="258.6" y2="549.8" stroke="#333333"/><line x1="258.6" y1="549.8" x2="265.1" y2="536.1" stroke="#333333"/><line x1="261.9" y1="548.92" x2="266.5" y2="539.21" stroke="#333333"/><line x1="265.1" y1="536.1" x2="278" y2="532.9" stroke="#333333"/><line x1="278" y1="532.9" x2="286.9" y2="543.4" stroke="#333333"/><line x1="277.45" y1="536.27" x2="283.49" y2="543.4" stroke="#333333"/><line x1="286.9" y1="543.4" x2="281.3" y2="557.4" stroke="#333333"/><line x1="281.3" y1="557.4" x2="268.3" y2="560.4" stroke="#333333"/><line x1="278.56" y1="555.36" x2="269.87" y2="557.37" stroke="#333333"/><line x1="268.3" y1="560.4" x2="258.6" y2="549.8" stroke="#333333"/></g><text x="212.9" y="550.91" font-size="5.3" text-anchor="middle" fill="#f01a20" stroke="#f01a20">O</text><text x="200.9" y="573.31" font-size="5.3" fill="#3030a4" stroke="#3030a4" text-anchor="end" dx="1.9">HN</text><text x="187.8" y="594.91" font-size="5.3" text-anchor="middle" fill="#f01a20" stroke="#f01a20">O</text><text x="212.9" y="594.91" font-size="5.3" text-anchor="middle" fill="#3030a4" stroke="#3030a4">N</text><text x="213.2" y="609.21" font-size="5.3" fill="#333333" stroke="#333333" dx="-1.9">CH<tspan font-size="3.2" dy="0.8">3</tspan></text><text x="239.2" y="568.41" font-size="5.3" text-anchor="middle" fill="#3030a4" stroke="#3030a4">N</text><text x="239.2" y="592.21" font-size="5.3" text-anchor="middle" fill="#3030a4" stroke="#3030a4">N</text><text x="261.9" y="580.41" font-size="5.3" fill="#3030a4" stroke="#3030a4" dx="-1.9">NH</text><text x="291" y="605.11" font-size="5.3" text-anchor="middle" fill="#3030a4" stroke="#3030a4">N</text><text x="312.8" y="593.31" font-size="5.3" fill="#333333" stroke="#333333" dx="-1.9">CH<tspan font-size="3.2" dy="0.8">3</tspan></text><text x="291.8" y="630.21" font-size="5.3" fill="#333333" stroke="#333333" dx="-1.9">CH<tspan font-size="3.2" dy="0.8">3</tspan></text></svg>
</body></html>
